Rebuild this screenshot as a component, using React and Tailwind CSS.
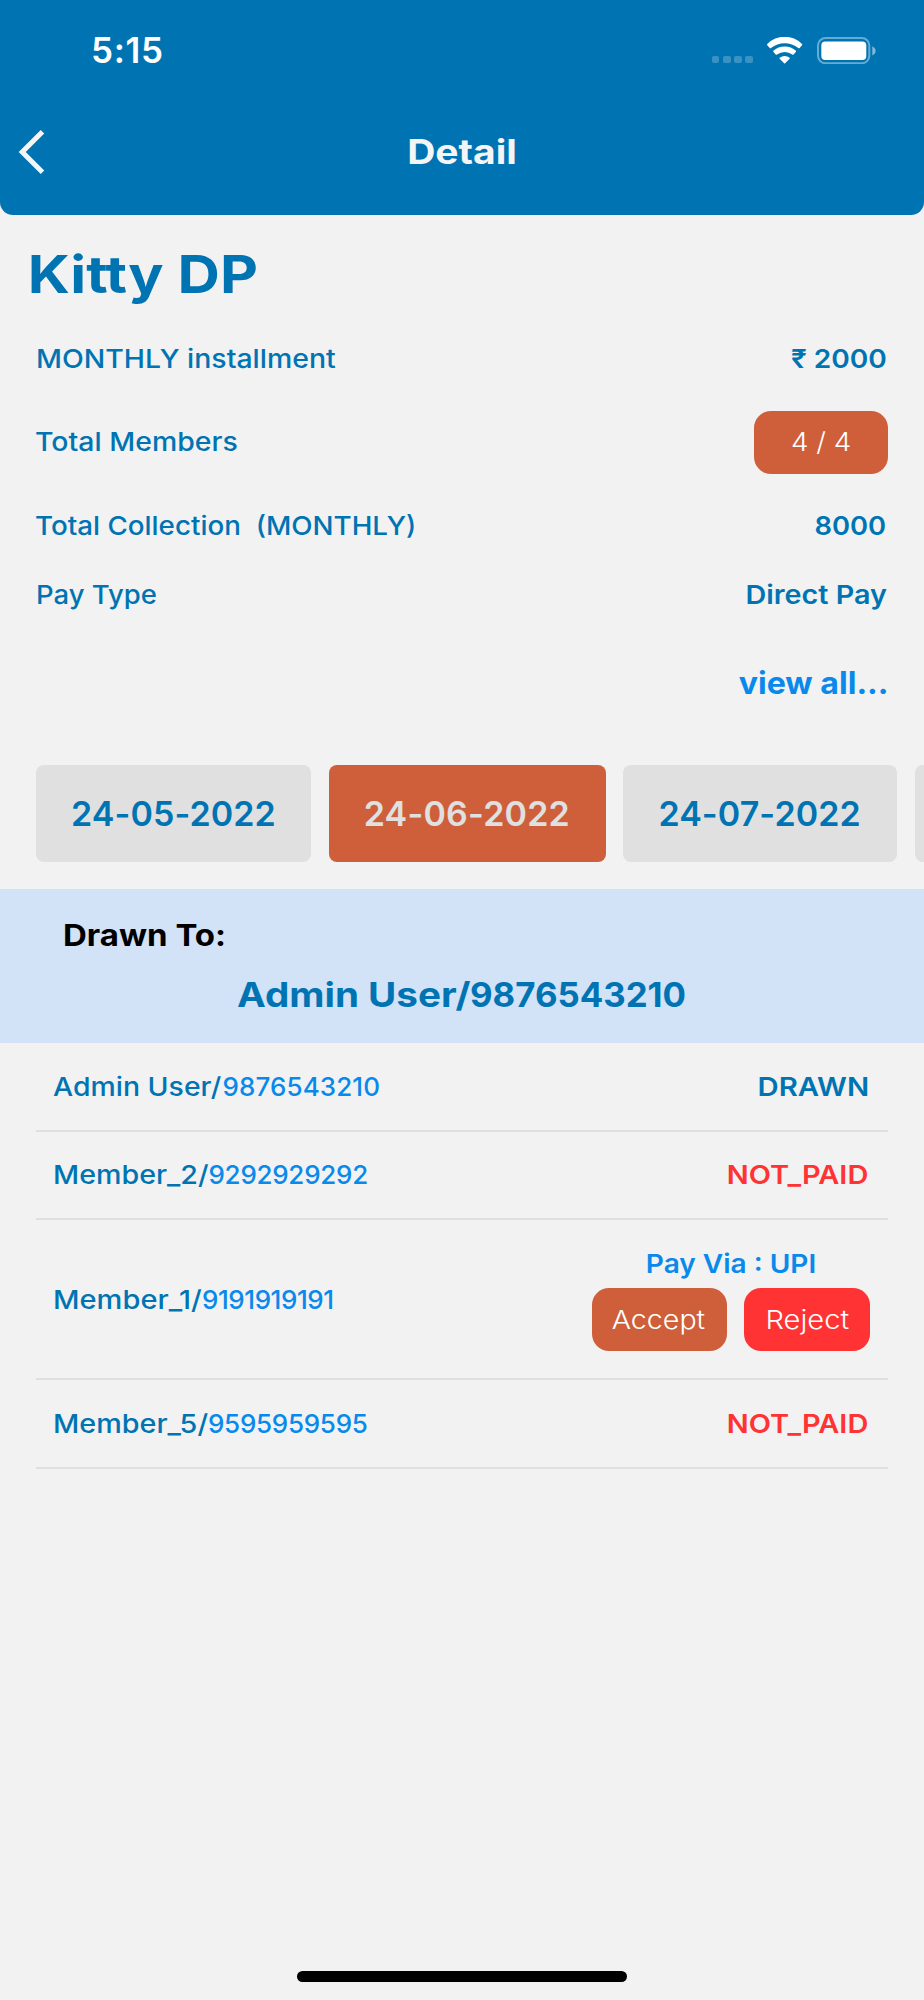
import React from 'react';

const dates = [
  { label: '24-05-2022', style: 'w-[275px] bg-[#e0e0e0] text-[#0074b3] tracking-[0.1px]' },
  { label: '24-06-2022', style: 'w-[277px] bg-[#cf5f3a] text-[#e0e0e0] tracking-[0.2px]' },
  { label: '24-07-2022', style: 'w-[273.700px] bg-[#e0e0e0] text-[#0074b3] tracking-[0.1px]' },
];

function StatusBar() {
  return (
    <div className="flex h-[101px] items-center justify-between pl-[91px] pr-[47.700px]">
      <span className="text-[35px] font-semibold tracking-[0.68px] text-white">5:15</span>
      <div className="flex items-center">
        <div className="mt-[18.500px] flex gap-[3.800px]">
          <span className="size-[7.300px] rounded-[2px] bg-white/22" />
          <span className="size-[7.300px] rounded-[2px] bg-white/22" />
          <span className="size-[7.300px] rounded-[2px] bg-white/22" />
          <span className="size-[7.300px] rounded-[2px] bg-white/22" />
        </div>
        <svg className="ml-[14.500px] mr-[14.500px] h-[26.700px] w-[35.300px]" viewBox="0 0 106 80" fill="white">
          <path d="M1 21A72.6 72.6 0 0 1 105 21Q107 23 105 25L98 33Q96 35 94 33A65.8 65.8 0 0 0 12 33Q10 35 8 33L1 25Q-1 23 1 21Z" />
          <path d="M19 41.500A50.8 50.8 0 0 1 87 41.500Q88 43 87 44.500L80 52.500Q78 54 76 52.500A39 39 0 0 0 30 52.500Q28 54 26 52.500L19 44.500Q18 43 19 41.500Z" />
          <path d="M38 62.500A23 23 0 0 1 68 62.500Q69 64 68 65.500L54.500 79Q53 80 51.500 79L38 65.500Q37 64 38 62.500Z" />
        </svg>
        <svg className="h-[27.300px] w-[59.300px]" viewBox="0 0 59.300 27.300">
          <rect x="1" y="1" width="51.300" height="25.300" rx="7.500" fill="none" stroke="white" strokeOpacity="0.4" strokeWidth="2" />
          <rect x="4.300" y="4.500" width="45" height="18.600" rx="4" fill="white" />
          <path d="M55.300 9.200Q58.600 10.800 58.600 13.800Q58.600 16.800 55.300 18.400Z" fill="white" fillOpacity="0.5" />
        </svg>
      </div>
    </div>
  );
}

function Header() {
  return (
    <header className="h-[214.500px] shrink-0 rounded-b-[13px] bg-[#0074b3]">
      <StatusBar />
      <div className="grid h-[101px] grid-cols-3 items-center text-[#f5f5f5]">
        <svg className="ml-[17.500px] h-[46px] w-[28px]" viewBox="0 0 28 46" fill="none" stroke="currentColor" strokeWidth="5">
          <path d="M24.500 2.700L4.200 23L24.500 43.300" />
        </svg>
        <h1 className="scale-x-[1.147] text-center text-[34px] font-bold">Detail</h1>
      </div>
    </header>
  );
}

function Member({ name, phone, nameStyle, phoneStyle, children }) {
  return (
    <div className="flex items-center justify-between pl-[17px] pr-[18px] text-[26px]">
      <div className="flex font-medium text-[#0074b3]">
        <span className={`origin-left ${nameStyle}`}>{name}/</span>
        <span className={`text-[#0989ec] ${phoneStyle}`}>{phone}</span>
      </div>
      {children}
    </div>
  );
}

function App() {
  return (
    <div className="flex h-[2000px] w-[924px] flex-col overflow-hidden bg-[#f2f2f2] font-['Inter',sans-serif] whitespace-nowrap">
      <Header />

      <h2 className="flex h-[120px] origin-left scale-x-[1.128] items-center pl-[24.500px] text-[52px] font-bold text-[#0074b3]">Kitty DP</h2>

      <section className="px-9 text-[26px] text-[#0074b3]">
        <div className="flex h-[48px] items-center justify-between">
          <span className="-ml-[0.500px] origin-left scale-x-[1.094] font-medium">MONTHLY installment</span>
          <span className="mr-px origin-right scale-x-[1.08] font-semibold">₹ 2000</span>
        </div>
        <div className="flex h-[119px] items-center justify-between">
          <span className="-ml-px origin-left scale-x-[1.094] pb-[2px] font-medium">Total Members</span>
          <span className="flex h-[63px] w-[134px] items-center justify-center rounded-[17px] bg-[#cf5f3a] font-light text-white">
            <span className="scale-x-[1.07] pb-[2px]">4 / 4</span>
          </span>
        </div>
        <div className="flex h-[48.500px] items-center justify-between">
          <span className="-ml-px origin-left scale-x-[1.068] font-medium">Total Collection&nbsp; (MONTHLY)</span>
          <span className="mr-[1.500px] origin-right scale-x-[1.053] font-semibold">8000</span>
        </div>
        <div className="flex h-[88px] items-center justify-between">
          <span className="-ml-[0.500px] origin-left scale-x-[1.057] font-medium">Pay Type</span>
          <span className="mr-[1.500px] origin-right scale-x-[1.105] font-semibold">Direct Pay</span>
        </div>
      </section>

      <div className="flex h-[90px] items-center justify-end pr-[35px]">
        <a className="origin-right scale-x-[1.037] text-[31px] font-bold text-[#0989ec]">view all...</a>
      </div>

      <div className="mt-[37px] mb-[27px] flex h-[97px] shrink-0 gap-[17.700px] overflow-hidden pl-9">
        {dates.map((date) => (
          <div key={date.label} className={`flex shrink-0 items-center rounded-[8px] pl-[35px] text-[34px] font-semibold ${date.style}`}>
            {date.label}
          </div>
        ))}
        <div className="w-[275px] shrink-0 rounded-[8px] bg-[#e0e0e0]" />
      </div>

      <section className="h-[154px] shrink-0 bg-[#d2e2f7] pt-[26px] font-bold">
        <p className="ml-[62.500px] flex h-[41px] origin-left scale-x-[1.1] items-center text-[30px] text-black">Drawn To:</p>
        <p className="ml-[236.500px] flex h-[77px] items-center text-[34px] text-[#0074b3]">
          <span className="w-[233px] origin-left scale-x-[1.135]">Admin User/</span>
          <span className="origin-left scale-x-[1.023]">9876543210</span>
        </p>
      </section>

      <section className="mx-9 grid grid-cols-1 grid-rows-[88.500px_88.500px_160px_89px] *:border-b-2 *:border-[#dfdfdf]">
        <Member name="Admin User" phone="9876543210" nameStyle="w-[169.500px] scale-x-[1.093]" phoneStyle="tracking-[0.1px]">
          <span className="mr-px origin-right scale-x-[1.126] font-semibold text-[#0074b3]">DRAWN</span>
        </Member>
        <Member name="Member_2" phone="9292929292" nameStyle="w-[155.500px] scale-x-[1.102]" phoneStyle="tracking-[-0.26px]">
          <span className="mr-[1.500px] origin-right scale-x-[1.112] font-semibold text-[#ff3333]">NOT_PAID</span>
        </Member>
        <Member name="Member_1" phone="9191919191" nameStyle="w-[149px] scale-x-[1.118]" phoneStyle="tracking-[-0.42px]">
          <div className="mb-2 flex flex-col items-center">
            <span className="flex h-[48px] scale-x-[1.078] items-center font-semibold text-[#0989ec]">Pay Via : UPI</span>
            <div className="flex gap-[17.500px] font-light text-white">
              <button className="flex h-[63px] w-[135px] items-center justify-center rounded-[17px] bg-[#cf5f3a]">
                <span className="scale-x-[1.1] pr-px">Accept</span>
              </button>
              <button className="flex h-[63px] w-[126px] items-center justify-center rounded-[17px] bg-[#ff3333]">
                <span className="scale-x-[1.12]">Reject</span>
              </button>
            </div>
          </div>
        </Member>
        <Member name="Member_5" phone="9595959595" nameStyle="w-[155px] scale-x-[1.107]" phoneStyle="tracking-[-0.27px]">
          <span className="mr-[1.500px] origin-right scale-x-[1.112] font-semibold text-[#ff3333]">NOT_PAID</span>
        </Member>
      </section>

      <div className="mt-auto mb-[18.500px] h-[10.500px] w-[330px] self-center rounded-full bg-black" />
    </div>
  );
}

export default App;
